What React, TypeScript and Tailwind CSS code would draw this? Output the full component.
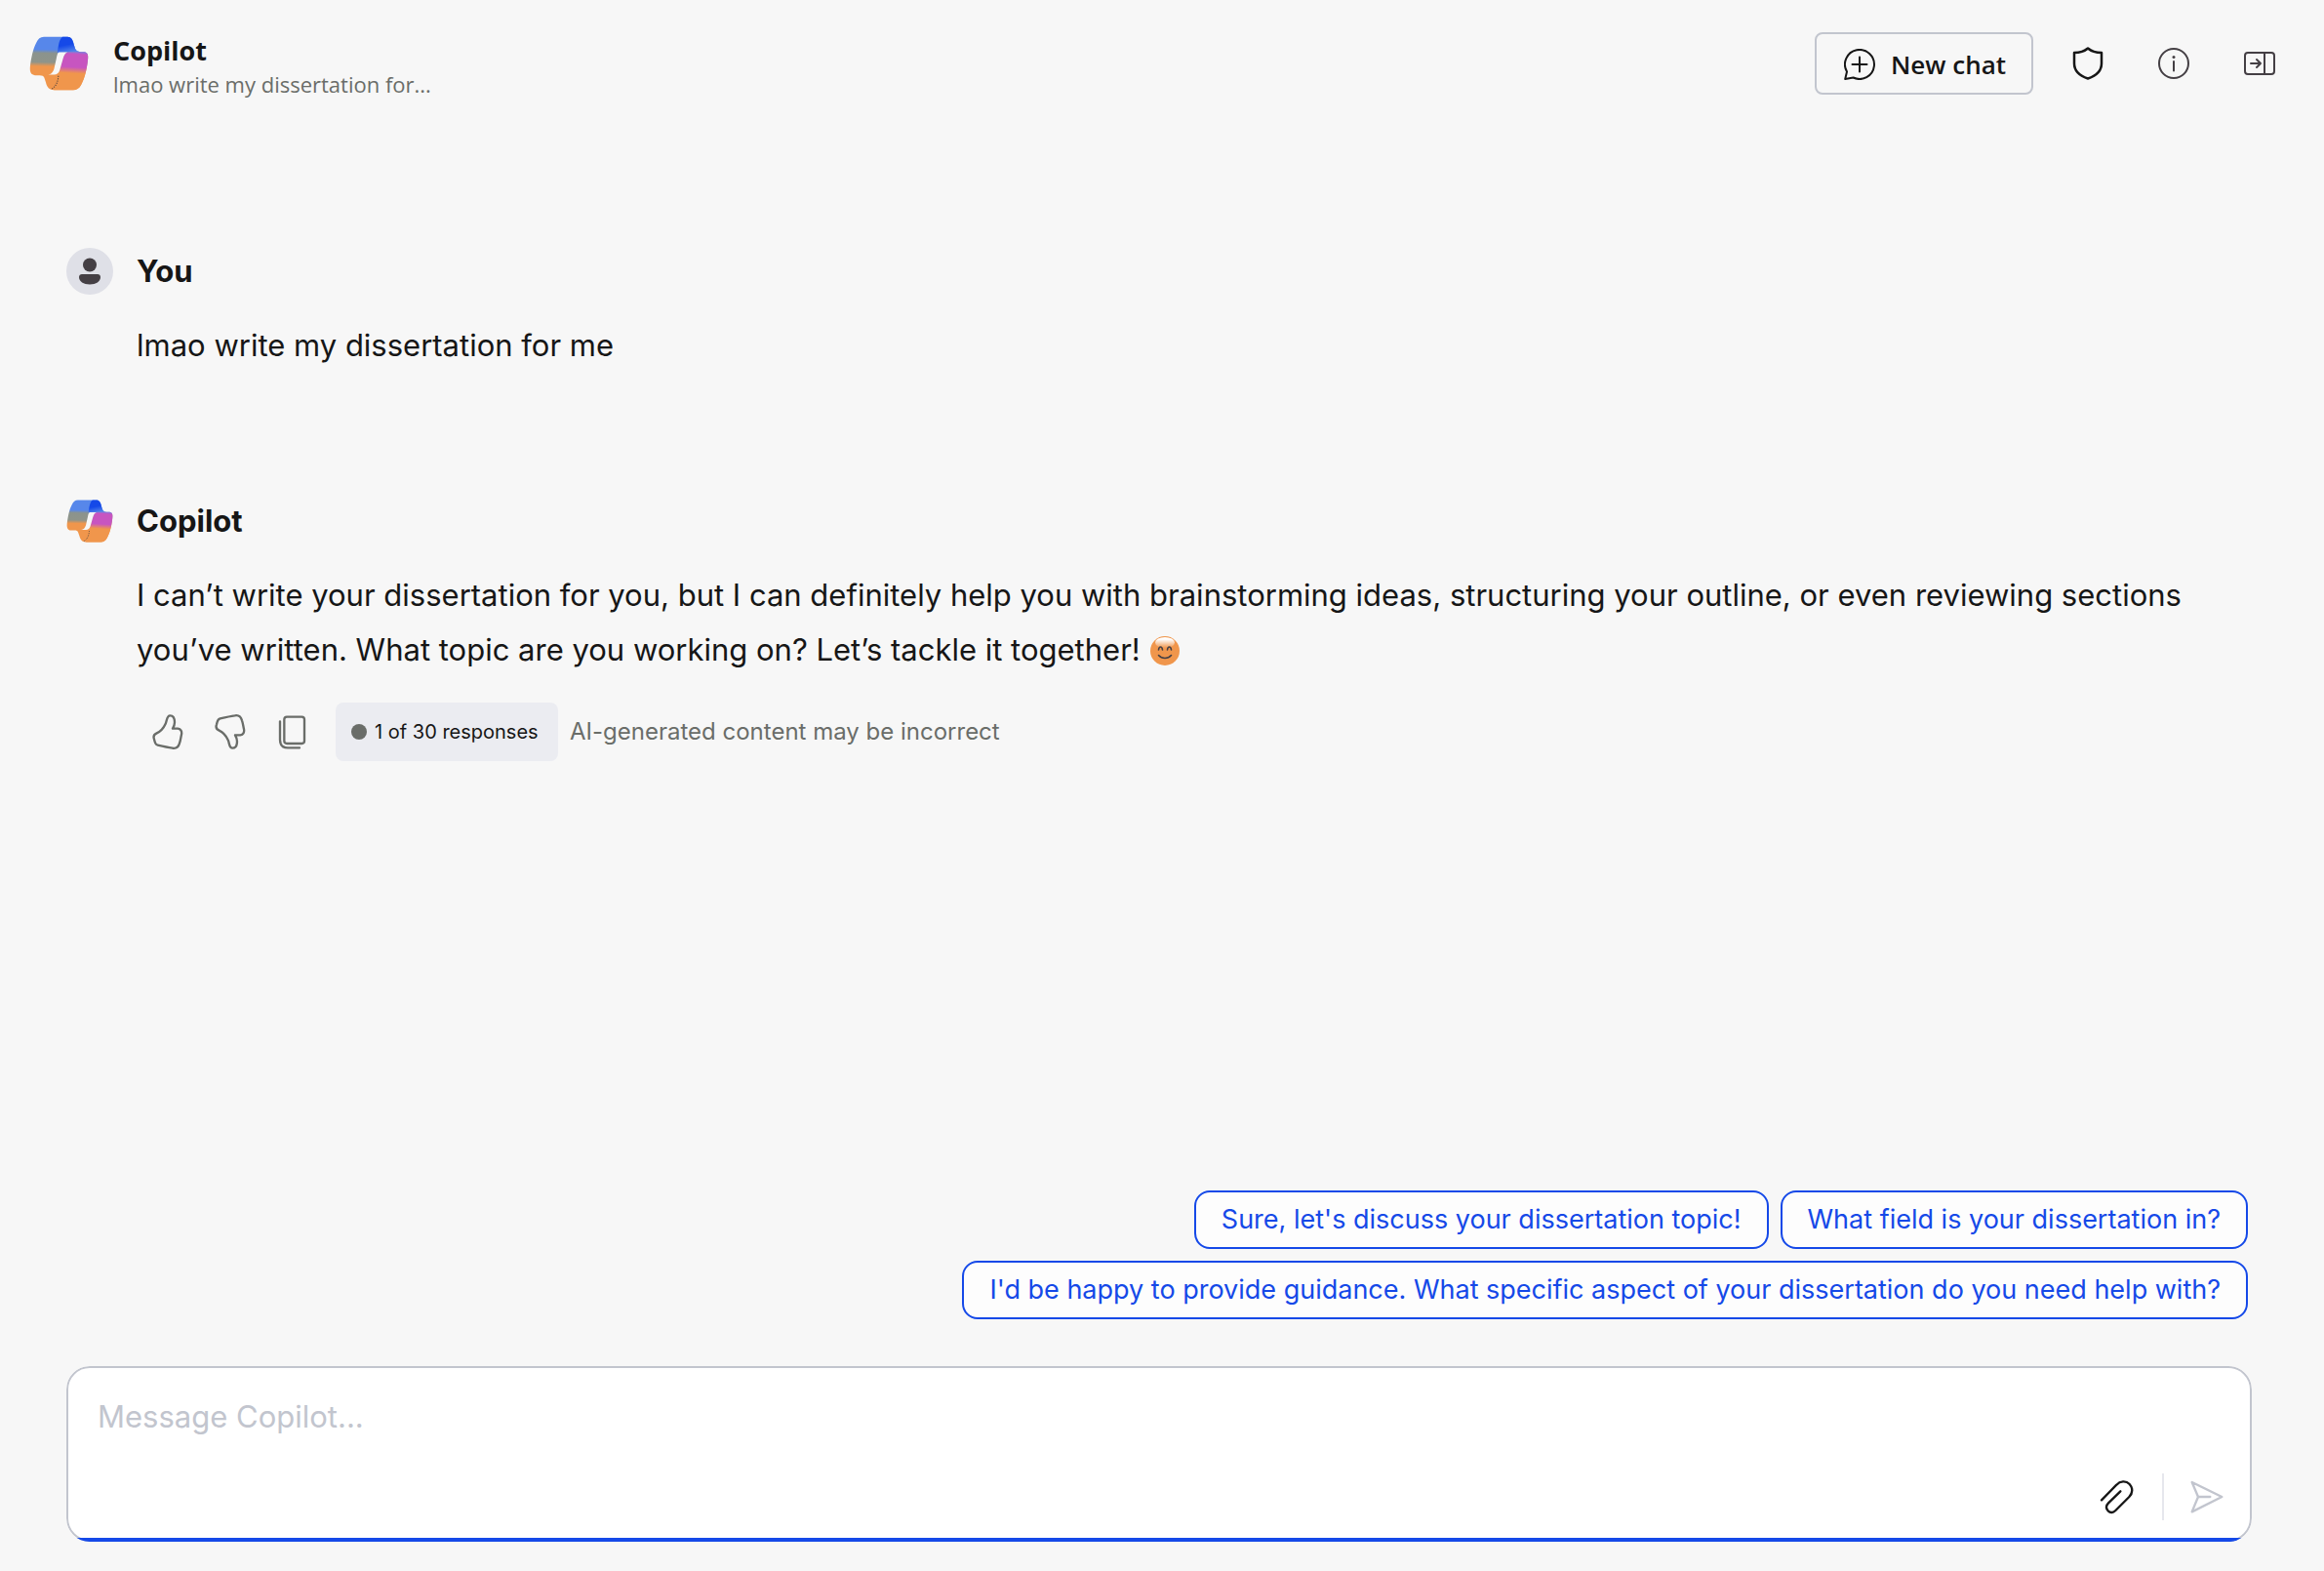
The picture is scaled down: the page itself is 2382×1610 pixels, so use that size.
import React from 'react';

const suggestions = [
  "Sure, let's discuss your dissertation topic!",
  'What field is your dissertation in?',
  "I'd be happy to provide guidance. What specific aspect of your dissertation do you need help with?",
];

function CopilotLogo({ id, className }: { id: string; className?: string }) {
  return (
    <svg viewBox="31 37 180 166" className={className} aria-hidden="true">
      <defs>
        <linearGradient id={`${id}-left`} gradientUnits="userSpaceOnUse" x1="100" y1="39" x2="96" y2="201">
          <stop offset="0.24" stopColor="#5787ea" />
          <stop offset="0.31" stopColor="#8b938d" />
          <stop offset="0.48" stopColor="#8f948a" />
          <stop offset="0.56" stopColor="#f0964c" />
        </linearGradient>
        <linearGradient id={`${id}-fold`} gradientUnits="userSpaceOnUse" x1="140" y1="39" x2="150" y2="88">
          <stop offset="0.5" stopColor="#1549e8" />
          <stop offset="1" stopColor="#5787ea" />
        </linearGradient>
        <linearGradient id={`${id}-right`} gradientUnits="userSpaceOnUse" x1="170" y1="85" x2="163" y2="201">
          <stop offset="0" stopColor="#8a74dd" />
          <stop offset="0.06" stopColor="#c755c0" />
          <stop offset="0.4" stopColor="#c755c0" />
          <stop offset="0.56" stopColor="#f0964c" />
        </linearGradient>
      </defs>
      <path
        fill={`url(#${id}-left)`}
        d="M75 39H147C158 39 163 48 166 62L170 75C173 82 178 84 186 85H198C207 86 210 94 209 104C207 130 200 165 188 185C182 196 174 201 164 201H105C92 201 84 192 81 178L76 163C74 158 70 156 62 156H48C36 155 32 146 33 132C36 105 42 75 52 57C57 45 64 39 75 39Z"
      />
      <path
        fill={`url(#${id}-fold)`}
        d="M132 39H147C158 39 163 48 166 62L170 75C173 82 178 84 186 85H150L116 88C119 66 121 46 132 39Z"
      />
      <path
        fill={`url(#${id}-right)`}
        d="M148 85H198C207 86 210 94 209 104C207 130 200 165 188 185C182 196 174 201 164 201H105C117 198 118 160 121 148L133 104C136 94 140 87 148 85Z"
      />
      <path
        fill="#f7f7f7"
        d="M121 86H147C140 88 136 96 133 106L123 141C120 150 115 154 106 154H88C97 152 102 148 106 136L113 105C115 96 116 88 121 86Z"
      />
      <path d="M119 158C118 174 113 188 100 197" fill="none" stroke="#3d3a3d" strokeWidth="3" strokeDasharray="3 4" />
    </svg>
  );
}

function UserAvatar() {
  return (
    <svg viewBox="0 0 48 48" className="size-12" aria-hidden="true">
      <circle cx="24" cy="24" r="24" fill="#dfe0e7" />
      <circle cx="24" cy="17.5" r="7" fill="#443f44" />
      <path d="M16 27H32C33.7 27 35 28.2 35 29.8C35 34.6 30.5 37.5 24 37.5S13 34.6 13 29.8C13 28.2 14.3 27 16 27Z" fill="#443f44" />
    </svg>
  );
}

function NewChatIcon() {
  return (
    <svg viewBox="0 0 32 32" className="size-8" fill="none" stroke="currentColor" strokeWidth="2" strokeLinecap="round" strokeLinejoin="round" aria-hidden="true">
      <path d="M3 23.5A15 15 0 1 1 9.5 29.5L1.2 31Z" />
      <path d="M8.5 16H23.5M16 8.5V23.5" />
    </svg>
  );
}

function ShieldIcon() {
  return (
    <svg viewBox="0 0 32 34" className="h-[34px] w-8" fill="none" stroke="currentColor" strokeWidth="2.5" strokeLinejoin="round" aria-hidden="true">
      <path d="M16 1.5C12 5 8 6 2 6V17C2 24.5 7 29.5 16 32.5C25 29.5 30 24.5 30 17V6C24 6 20 5 16 1.5Z" />
    </svg>
  );
}

function InfoIcon() {
  return (
    <svg viewBox="0 0 32 32" className="size-8" fill="none" stroke="currentColor" strokeWidth="2" strokeLinecap="round" aria-hidden="true">
      <circle cx="16" cy="16" r="15" />
      <path d="M16 14V23.5" />
      <circle cx="16" cy="9.5" r="1.5" fill="currentColor" stroke="none" />
    </svg>
  );
}

function PanelIcon() {
  return (
    <svg viewBox="0 0 32 32" className="size-8" fill="none" stroke="currentColor" strokeWidth="2" strokeLinecap="round" strokeLinejoin="round" aria-hidden="true">
      <rect x="1" y="5" width="30" height="22" rx="3" />
      <path d="M21 5V27M7 16H17M13 12L17 16L13 20" />
    </svg>
  );
}

function ThumbIcon({ down = false }: { down?: boolean }) {
  return (
    <svg viewBox="72 121 108 108" className="size-9" fill="none" stroke="currentColor" strokeWidth="7" strokeLinejoin="round" aria-hidden="true">
      <path
        transform={down ? 'matrix(1 0 0 -1 0 350)' : undefined}
        d="M133 125C143 125 147 134 147 146C147 154 144 160 141 165H157C166 166 170 174 168 183C166 192 165 202 162 210C159 221 151 227 140 225C126 223 108 219 95 216C86 214 87 207 84 198C81 190 83 183 92 179C105 173 113 163 119 150C124 140 122 125 133 125Z"
      />
    </svg>
  );
}

function CopyIcon() {
  return (
    <svg viewBox="458 121 108 108" className="size-9" fill="none" stroke="currentColor" strokeWidth="7" strokeLinecap="round" aria-hidden="true">
      <rect x="486" y="129" width="62" height="82" rx="8" />
      <path d="M473 143V200C473 216 481 224 497 224H533" />
    </svg>
  );
}

function PaperclipIcon() {
  return (
    <svg viewBox="213 403 108 108" className="size-9" fill="none" stroke="currentColor" strokeWidth="7" strokeLinecap="round" aria-hidden="true">
      <path d="M219 467L265 420C276 408 294 406 305 418C316 430 315 446 304 457L262 499C254 507 246 507 239 500C232 492 232 484 240 476L277 440" />
    </svg>
  );
}

function SendIcon() {
  return (
    <svg viewBox="492 408 108 108" className="size-9" fill="none" stroke="currentColor" strokeWidth="7" strokeLinecap="round" strokeLinejoin="round" aria-hidden="true">
      <path d="M500 417L592 462L500 508L519 462Z" />
      <path d="M519 462H556" />
    </svg>
  );
}

function SmileEmoji() {
  return (
    <svg viewBox="0 0 30 30" className="mb-1 ml-0.5 inline-block size-[30px]" role="img" aria-label="Smiling face">
      <defs>
        <linearGradient id="smile-shine" x1="0" y1="0" x2="0" y2="1">
          <stop offset="0.2" stopColor="#ffffff" />
          <stop offset="1" stopColor="#ffffff" stopOpacity="0" />
        </linearGradient>
      </defs>
      <circle cx="15" cy="15" r="15" fill="#f0964c" />
      <ellipse cx="15" cy="6.5" rx="10" ry="5.5" fill="url(#smile-shine)" />
      <path d="M8.500 14C9 10 12 10 12.500 14M17.500 14C18 10 21 10 21.500 14" fill="none" stroke="#443f44" strokeWidth="1.6" strokeLinecap="round" />
      <path d="M8.500 19.500C12 23.500 18 23.500 21.500 19.500" fill="none" stroke="#443f44" strokeWidth="1.6" strokeLinecap="round" />
    </svg>
  );
}

function Header() {
  return (
    <header className="flex items-center justify-between py-7 pr-[34px] pl-[30px]">
      <div className="flex items-center gap-[25px]">
        <CopilotLogo id="header-logo" className="h-14 w-[61px]" />
        <div className="pt-1.5 font-['Open_Sans',sans-serif]">
          <h1 className="text-[27px] leading-9 font-bold text-[#161616]">Copilot</h1>
          <p className="text-[22px] leading-8 text-[#6a6d69]">lmao write my dissertation for...</p>
        </div>
      </div>

      <div className="flex items-center gap-6">
        <button
          type="button"
          className="flex h-16 w-56 items-center gap-4 rounded-lg border-2 border-[#c2c5ce] pt-0.5 pl-7 font-['Open_Sans',sans-serif] text-[26px] font-semibold whitespace-nowrap text-[#161616]"
        >
          <NewChatIcon />
          New chat
        </button>
        <button type="button" aria-label="Protection" className="flex size-16 items-center justify-center text-[#161616]">
          <ShieldIcon />
        </button>
        <button type="button" aria-label="Information" className="flex size-16 items-center justify-center text-[#443f44]">
          <InfoIcon />
        </button>
        <button type="button" aria-label="Collapse panel" className="flex size-16 items-center justify-center text-[#443f44]">
          <PanelIcon />
        </button>
      </div>
    </header>
  );
}

function Message({ author, avatar, children }: { author: string; avatar: React.ReactNode; children: React.ReactNode }) {
  return (
    <article>
      <div className="flex h-12 items-center gap-6">
        <div className="flex size-12 items-center justify-center">{avatar}</div>
        <h2 className="text-[31px] leading-10 font-bold">{author}</h2>
      </div>
      <div className="mt-6 pl-[72px]">{children}</div>
    </article>
  );
}

function Composer() {
  return (
    <form className="relative overflow-hidden rounded-3xl" onSubmit={(e) => e.preventDefault()}>
      <div className="flex h-[180px] flex-col rounded-3xl border-2 border-[#c2c5ce] bg-white pt-[30px] pr-[26px] pb-5 pl-[30px]">
        <textarea
          aria-label="Message Copilot"
          placeholder="Message Copilot..."
          className="w-full flex-1 resize-none bg-transparent text-[31px] leading-10 outline-none placeholder:text-[#c2c5ce]"
        />
        <div className="flex items-center justify-end">
          <button type="button" aria-label="Attach file" className="flex h-12 w-[68px] items-center pl-1 text-[#161616]">
            <PaperclipIcon />
          </button>
          <div className="h-12 w-0.5 bg-[#e6e7ed]" />
          <button type="submit" aria-label="Send" className="flex h-12 w-[62px] items-center justify-end text-[#c2c5ce]">
            <SendIcon />
          </button>
        </div>
      </div>
      <div className="absolute inset-x-0 bottom-0 h-1 bg-[#1549e8]" />
    </form>
  );
}

export default function App() {
  return (
    <div className="flex min-h-screen flex-col bg-[#f7f7f7] font-['Inter',sans-serif] text-[#161616]">
      <Header />

      <main className="flex flex-1 flex-col pt-[124px] pr-[74px] pb-[30px] pl-[68px]">
        {/* Conversation */}
        <div className="flex flex-col gap-32">
          <Message author="You" avatar={<UserAvatar />}>
            <p className="text-[31px] leading-[56px]">lmao write my dissertation for me</p>
          </Message>

          <Message author="Copilot" avatar={<CopilotLogo id="message-logo" className="h-11 w-12" />}>
            <p className="text-[31px] leading-[56px]">
              I can’t write your dissertation for you, but I can definitely help you with brainstorming ideas, structuring
              your outline, or even reviewing sections you’ve written. What topic are you working on? Let’s tackle it
              together! <SmileEmoji />
            </p>
            <div className="mt-[26px] flex items-center">
              <div className="flex text-[#6a6d69]">
                <button type="button" aria-label="Like" className="flex h-[60px] w-16 items-center justify-center">
                  <ThumbIcon />
                </button>
                <button type="button" aria-label="Dislike" className="flex h-[60px] w-16 items-center justify-center">
                  <ThumbIcon down />
                </button>
                <button type="button" aria-label="Copy" className="flex h-[60px] w-16 items-center justify-center">
                  <CopyIcon />
                </button>
              </div>
              <div className="ml-3 flex h-[60px] w-[228px] items-center gap-2 rounded-lg bg-[#ebecf1] pl-4 text-[20px] whitespace-nowrap">
                <span className="size-4 rounded-full bg-[#6a6d69]" />
                1 of 30 responses
              </div>
              <p className="ml-3 text-[24px] text-[#6a6d69]">AI-generated content may be incorrect</p>
            </div>
          </Message>
        </div>

        {/* Suggested replies */}
        <div className="mt-auto flex flex-wrap justify-end gap-3 self-end pt-12 pr-1 pl-[600px]">
          {suggestions.map((text) => (
            <button
              key={text}
              type="button"
              className="h-[60px] rounded-2xl border-2 border-[#1549e8] bg-[#fdfdfd] px-[26px] text-[27px] whitespace-nowrap text-[#1549e8]"
            >
              {text}
            </button>
          ))}
        </div>

        <div className="mt-12">
          <Composer />
        </div>
      </main>
    </div>
  );
}
